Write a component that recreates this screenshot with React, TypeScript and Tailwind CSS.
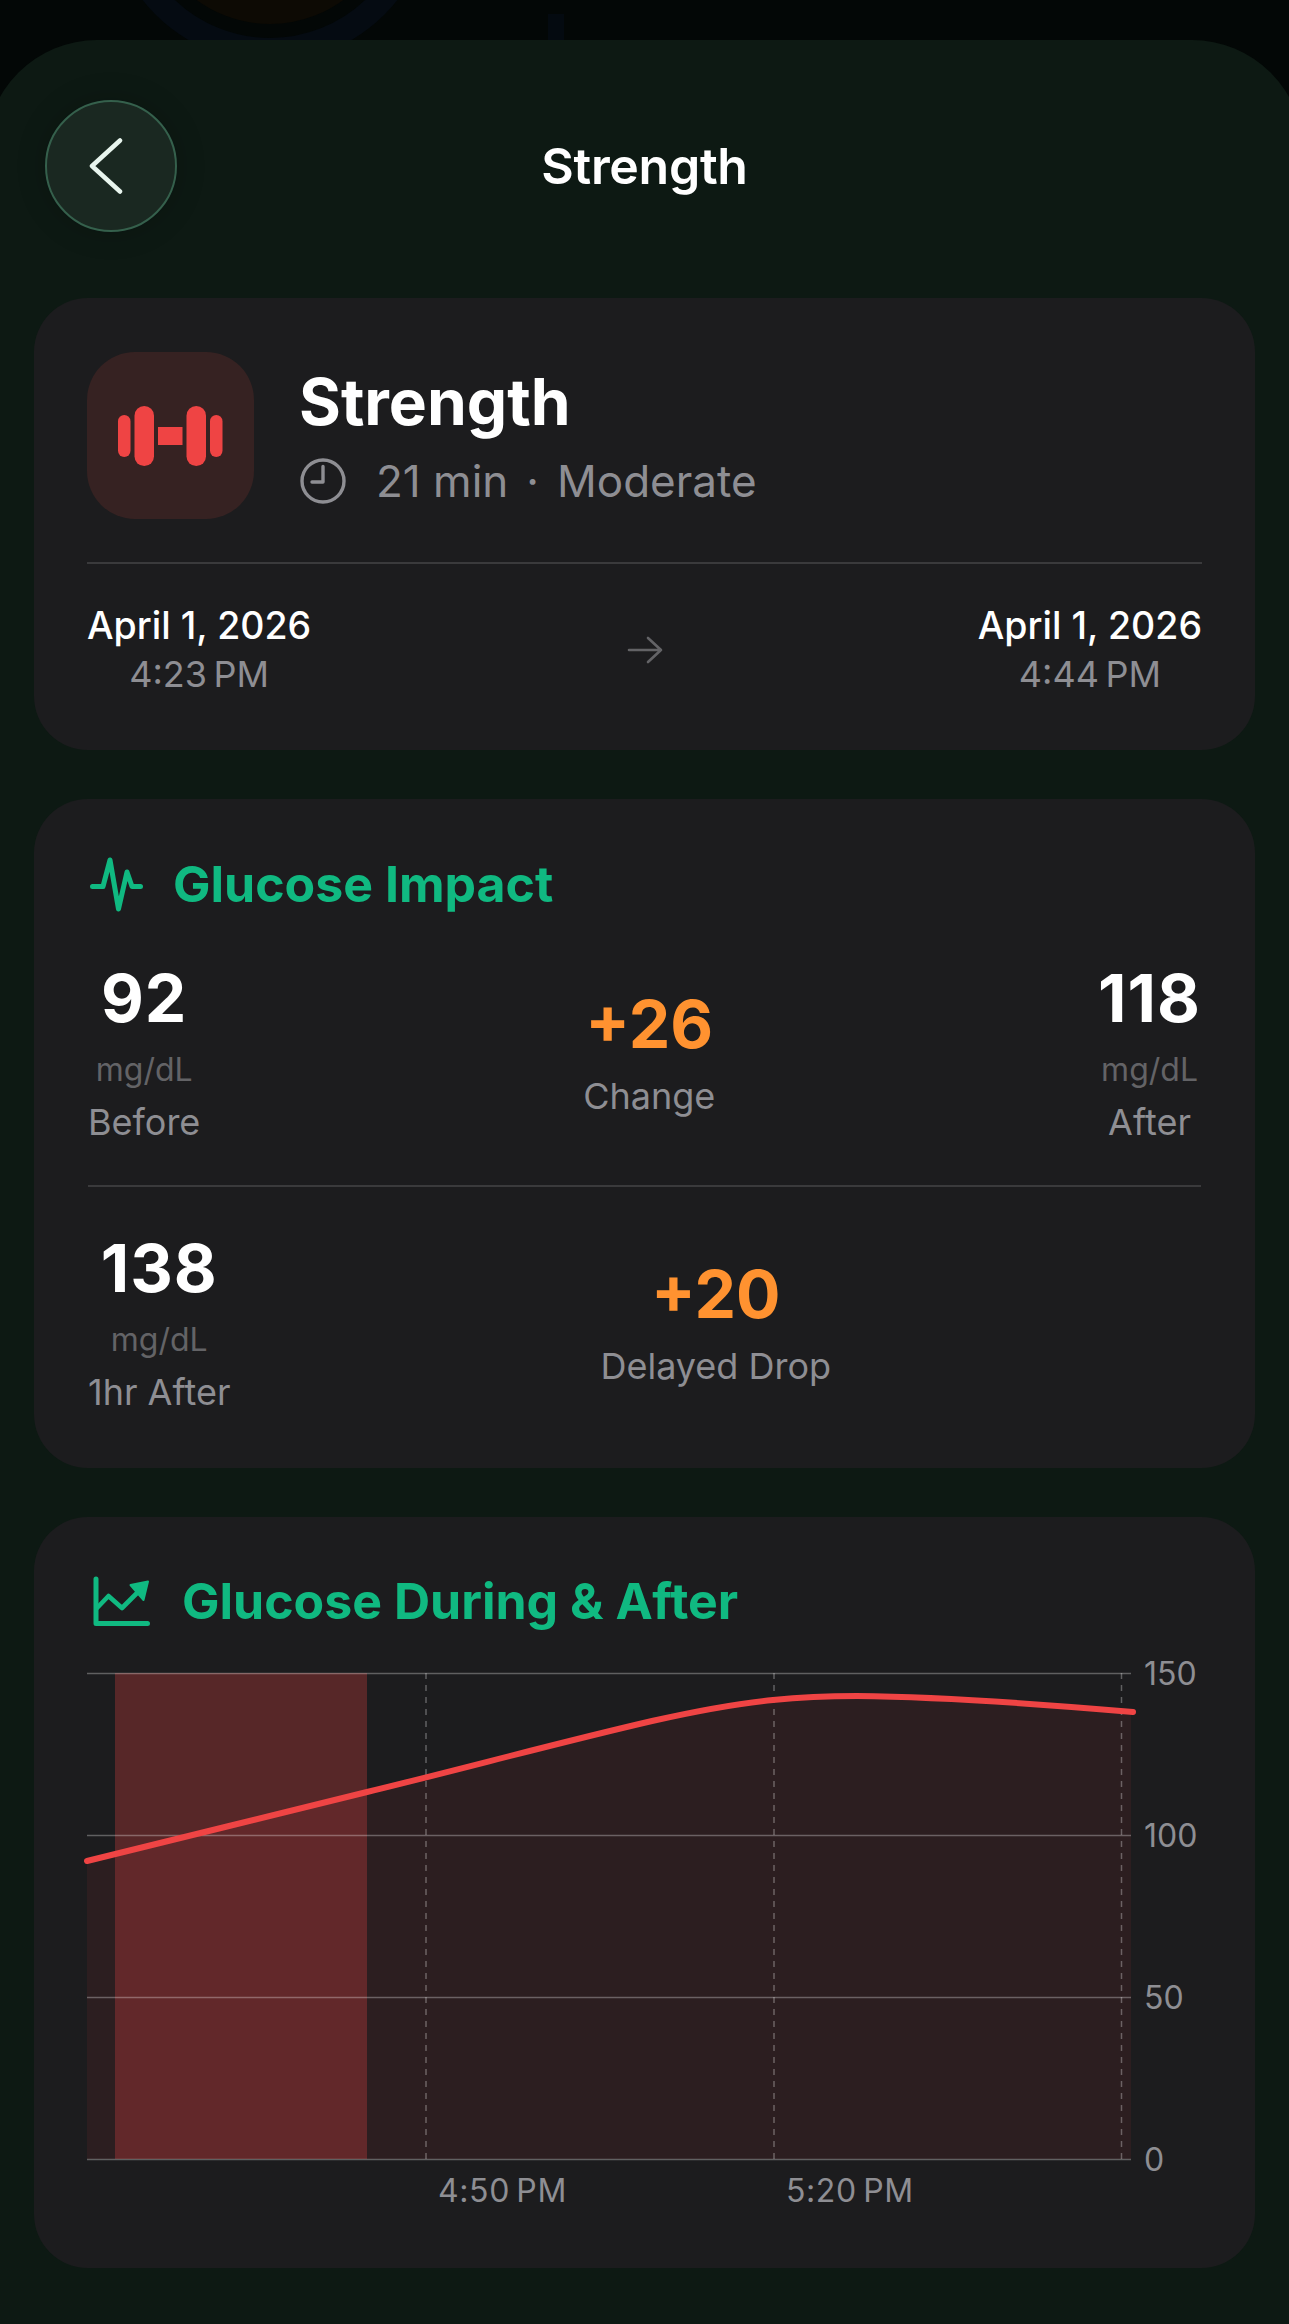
import React from 'react'

const font = { fontFamily: 'Inter, "Noto Sans", sans-serif' }

function DumbbellIcon() {
  return (
    <svg width="105" height="60" viewBox="0 0 105 60" fill="#ef4444">
      <rect x="0" y="9" width="12.5" height="42" rx="6.25" />
      <rect x="16.5" y="0" width="19.5" height="60" rx="9.75" />
      <rect x="40" y="21" width="24.5" height="18" />
      <rect x="68.5" y="0" width="19.5" height="60" rx="9.75" />
      <rect x="92" y="9" width="12.5" height="42" rx="6.25" />
    </svg>
  )
}

function ClockIcon() {
  return (
    <svg width="46" height="46" viewBox="0 0 46 46" fill="none" stroke="#8e8e93" strokeWidth="3.4" strokeLinecap="round" strokeLinejoin="round">
      <circle cx="23" cy="23" r="21" />
      <path d="M23 8.5V24H12" />
    </svg>
  )
}

function PulseIcon() {
  return (
    <svg width="53" height="55" viewBox="0 0 53 55" fill="none" stroke="#10b981" strokeWidth="5" strokeLinecap="round" strokeLinejoin="round">
      <path d="M2.5 29.5H13L20 3L28.5 52L37 15L42 29.5H50.5" />
    </svg>
  )
}

function TrendIcon() {
  return (
    <svg width="58" height="51" viewBox="0 0 58 51" fill="none" strokeLinecap="round" strokeLinejoin="round">
      <path d="M3 3V47.5H54.5" stroke="#10b981" strokeWidth="5" />
      <path d="M4 32L15.5 20L29 32L44 17" stroke="#10b981" strokeWidth="4.6" />
      <path d="M37.5 9L55 5.5L50.5 24Z" fill="#10b981" stroke="#10b981" strokeWidth="2" />
    </svg>
  )
}

function Reading({ value, label }: { value: string; label: string }) {
  return (
    <div className="flex flex-col items-center">
      <div className="text-[66px] leading-[72px] font-bold tracking-[1px] text-white">{value}</div>
      <div className="text-[32px] leading-[40px] mt-[16px] text-[#636366]">mg/dL</div>
      <div className="text-[36px] leading-[44px] mt-[10px] text-[#8e8e93]">{label}</div>
    </div>
  )
}

function Delta({ value, label }: { value: string; label: string }) {
  return (
    <div className="flex flex-col items-center">
      <div className="text-[66px] leading-[72px] font-bold text-[#ff9230]">{value}</div>
      <div className="text-[36px] leading-[44px] mt-[14px] text-[#8e8e93]">{label}</div>
    </div>
  )
}

function GlucoseChart() {
  // svg origin is the top-left of the chart, 87/1674 on the page
  const curve = 'M0 188C93 165 187 142 280 119C375 96 470 70 565 48C605 39 645 31 686 27C715 24 742 23 770 23C862 24 954 31 1046 39'
  return (
    <div className="relative h-[540px] w-[1115px]">
      <svg width="1060" height="490" viewBox="0 0 1060 490" className="absolute left-0 top-0 overflow-visible" fill="none">
        <path d={`${curve}L1044 39V486H0Z`} fill="#ef4444" fillOpacity="0.08" />
        <rect x="28" y="0" width="252" height="486" fill="#ef4444" fillOpacity="0.28" />
        <g stroke="#ffffff" strokeOpacity="0.3" strokeWidth="1.5">
          <path d="M0 0.5H1044" />
          <path d="M0 162.5H1044" />
          <path d="M0 324.5H1044" />
          <path d="M0 486.5H1044" />
        </g>
        <g stroke="#ffffff" strokeOpacity="0.3" strokeWidth="1.5" strokeDasharray="6 6">
          <path d="M339 0V486" />
          <path d="M687 0V486" />
          <path d="M1034.5 0V486" />
        </g>
        <path d={curve} stroke="#ef4444" strokeWidth="6" strokeLinecap="round" />
      </svg>
      {[
        ['150', 'top-[-19px]'],
        ['100', 'top-[143px]'],
        ['50', 'top-[305px]'],
        ['0', 'top-[467px]'],
      ].map(([text, top]) => (
        <span key={text} className={`absolute left-[1057px] ${top} text-[32px] leading-[40px] text-[#8e8e93]`}>
          {text}
        </span>
      ))}
      <span className="absolute left-[351px] top-[498px] text-[32px] leading-[40px] tracking-[0.6px] text-[#8e8e93]">4:50{'\u202f'}PM</span>
      <span className="absolute left-[699px] top-[498px] text-[32px] leading-[40px] tracking-[0.6px] text-[#8e8e93]">5:20{'\u202f'}PM</span>
    </div>
  )
}

export default function App() {
  return (
    <div className="relative h-[2324px] w-[1289px] overflow-hidden bg-[#030706]" style={font}>
      {/* blurred rings of the screen behind the sheet */}
      <svg width="1289" height="40" viewBox="0 0 1289 40" fill="none" className="block">
        <circle cx="270" cy="-100" r="150" stroke="#050b12" strokeWidth="24" />
        <circle cx="270" cy="-100" r="112" stroke="#0d0a04" strokeWidth="24" />
        <rect x="548" y="14" width="16" height="26" fill="#040a10" />
      </svg>

      <div className="mx-[-14px] h-[2284px] rounded-t-[111px] bg-[#0d1913] px-[14px]">
        <div className="grid grid-cols-[132px_1fr_132px] items-center px-[45px] pt-[60px]">
          <div className="flex h-[132px] w-[132px] items-center justify-center rounded-full border-[2px] border-[#35604c] bg-[#1a2821] shadow-[0_0_30px_rgba(0,0,0,0.2)]">
            <svg width="34" height="56" viewBox="0 0 34 56" fill="none" stroke="#e8f5ee" strokeWidth="4.5" strokeLinecap="round" strokeLinejoin="round" className="mr-[11px]">
              <path d="M31 2.5L3 28L31 53.5" />
            </svg>
          </div>
          <h1 className="text-center text-[50px] leading-[60px] font-semibold tracking-[-0.3px] text-white">Strength</h1>
          <div />
        </div>

        <div className="mt-[66px] flex flex-col gap-[49px] px-[34px]">
          {/* workout summary */}
          <section className="h-[452px] rounded-[54px] bg-[#1c1c1e] px-[53px] pt-[54px]">
            <div className="flex h-[167px] items-center gap-[45px]">
              <div className="flex h-[167px] w-[167px] items-center justify-center rounded-[48px] bg-[#362222]">
                <DumbbellIcon />
              </div>
              <div>
                <div className="text-[64px] leading-[76px] font-bold text-white">Strength</div>
                <div className="mt-[14px] ml-[1px] flex items-center text-[44px] leading-[54px] text-[#8e8e93]">
                  <ClockIcon />
                  <span className="ml-[30px]">21 min</span>
                  <span className="mx-[18px]">·</span>
                  <span>Moderate</span>
                </div>
              </div>
            </div>
            <div className="mt-[43px] h-[1.5px] bg-[#3a3a3c]" />
            <div className="mt-[38px] flex items-center justify-between">
              <div className="flex flex-col items-center">
                <div className="text-[37.5px] leading-[48px] font-medium text-white">April 1, 2026</div>
                <div className="text-[36px] leading-[49px] text-[#8e8e93]">4:23{'\u202f'}PM</div>
              </div>
              <svg width="36" height="28" viewBox="0 0 36 28" fill="none" stroke="#636366" strokeWidth="2.6" strokeLinecap="round" strokeLinejoin="round">
                <path d="M2 14H34M21 2L34 14L21 26" />
              </svg>
              <div className="flex flex-col items-center">
                <div className="text-[37.5px] leading-[48px] font-medium text-white">April 1, 2026</div>
                <div className="text-[36px] leading-[49px] text-[#8e8e93]">4:44{'\u202f'}PM</div>
              </div>
            </div>
          </section>

          {/* glucose impact */}
          <section className="h-[669px] rounded-[54px] bg-[#1c1c1e] px-[54px] pt-[55px]">
            <div className="flex items-center gap-[30px] pl-[2px]">
              <PulseIcon />
              <h2 className="text-[50px] leading-[60px] font-bold text-[#10b981]">Glucose Impact</h2>
            </div>
            <div className="mt-[48px] flex items-center justify-between">
              <Reading value="92" label="Before" />
              <Delta value="+26" label="Change" />
              <Reading value="118" label="After" />
            </div>
            <div className="mt-[41px] h-[1.5px] bg-[#3a3a3c]" />
            <div className="mt-[45px] flex items-center justify-between">
              <Reading value="138" label="1hr After" />
              <Delta value="+20" label="Delayed Drop" />
              <div />
            </div>
          </section>

          {/* glucose chart */}
          <section className="h-[751px] rounded-[54px] bg-[#1c1c1e] px-[53px] pt-[54px]">
            <div className="flex items-center gap-[31px] pl-[6px]">
              <TrendIcon />
              <h2 className="text-[50px] leading-[60px] font-bold text-[#10b981]">Glucose During &amp; After</h2>
            </div>
            <div className="mt-[42px]">
              <GlucoseChart />
            </div>
          </section>
        </div>
      </div>
    </div>
  )
}
